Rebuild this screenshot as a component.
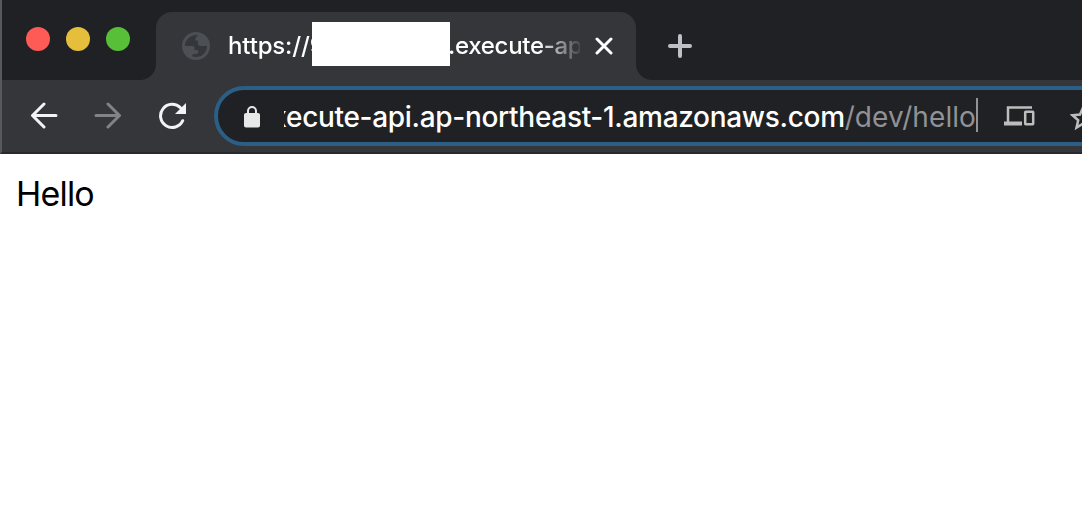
<div class="browser">
  <div class="tabstrip">
    <div class="lights">
      <span class="light red"></span>
      <span class="light yellow"></span>
      <span class="light green"></span>
    </div>
    <div class="tab">
      <svg class="globe" width="28" height="28" viewBox="0 0 28 28">
        <circle cx="14" cy="14" r="14" fill="#4c5054" />
        <path d="M3 14C3.500 11.500 5 9 8 9H13Q13 5.500 16 3.500L14.500 3L13 5.500V8.500H16V11.500Q16 14 18.500 14H25C25 20.500 20 25 14 25Q11.500 25 10.500 24.300V22H13.500Q16.500 22 16.500 19.500Q16.500 18 14.500 18H12.500V15.500Q12.500 14 10.500 14Z" fill="#35363a" />
        <path d="M3 14C3 8 8 3 14.500 3L13 5.500V9Z" fill="#35363a" />
      </svg>
      <div class="title"><span class="scheme">https://9</span><span class="mask"></span><span class="rest">.execute-api</span></div>
      <svg class="close" width="18" height="18" viewBox="0 0 18 18"><path d="M2 2L16 16M16 2L2 16" stroke="#fff" stroke-width="3" stroke-linecap="round" /></svg>
    </div>
    <svg class="plus" width="24" height="24" viewBox="0 0 24 24"><path d="M12 2V22M2 12H22" stroke="#bdc1c5" stroke-width="4" stroke-linecap="round" /></svg>
  </div>
  <div class="toolbar">
    <svg class="nav" width="28" height="28" viewBox="0 0 28 28"><path d="M26 13.500H3M14 2L2.500 13.500L14 25" fill="none" stroke="#f1f3f4" stroke-width="3" stroke-linecap="round" stroke-linejoin="round" /></svg>
    <svg class="nav" width="28" height="28" viewBox="0 0 28 28"><path d="M2 13.500H25M14 2L25.500 13.500L14 25" fill="none" stroke="#828386" stroke-width="3" stroke-linecap="round" stroke-linejoin="round" /></svg>
    <svg class="nav" width="28" height="28" viewBox="0 0 28 28"><path d="M24.700 18.700A11.600 11.600 0 1 1 22.500 5.800" fill="none" stroke="#f1f3f4" stroke-width="3" stroke-linecap="round" /><path d="M28 1V12H17Z" fill="#f1f3f4" /></svg>
    <div class="omnibox">
      <svg class="lock" width="16" height="22" viewBox="0 0 16 22"><path d="M4 8V5A4 4 0 0 1 12 5V8" fill="none" stroke="#e8e8e8" stroke-width="2" /><rect y="7" width="16" height="14.500" rx="2" fill="#e8e8e8" /></svg>
      <div class="url"><div class="line"><span class="host">execute-api.ap-northeast-1.amazonaws.com</span><span class="path">/dev/hello</span></div></div>
      <span class="caret"></span>
      <svg class="devices" width="32" height="22" viewBox="0 0 32 22"><path d="M28 2.500H4V17" fill="none" stroke="#bdbdbd" stroke-width="2.500" /><path d="M0 16.500H18V20.500H0Z" fill="#bdbdbd" /><rect x="21.200" y="6.700" width="8" height="12.600" rx="0.500" fill="none" stroke="#bdbdbd" stroke-width="2.500" /></svg>
      <svg class="star" width="26" height="26" viewBox="0 0 26 26"><path d="M13 2.500L16 9.500L23.500 10.200L17.800 15.200L19.500 22.600L13 18.700L6.500 22.600L8.200 15.200L2.500 10.200L10 9.500Z" fill="none" stroke="#bdbdbd" stroke-width="2.500" /></svg>
    </div>
  </div>
  <main>Hello</main>
</div>

<style>
  :global(body) { margin: 0; background: #fff; }
  .browser { width: 1082px; height: 522px; overflow: hidden; background: #fff; font-family: Inter, sans-serif; }
  svg { display: block; flex: none; }
  .tabstrip { box-sizing: border-box; height: 80px; display: flex; background: #202124; border-left: 2px solid #58595c; }
  .lights { display: flex; gap: 16px; padding: 27px 0 0 24px; width: 130px; }
  .light { width: 24px; height: 24px; border-radius: 50%; }
  .red { background: #ff5b56; }
  .yellow { background: #e5bf3c; }
  .green { background: #58c038; }
  .tab { position: relative; box-sizing: border-box; width: 480px; height: 68px; margin-top: 12px; padding-left: 26px; display: flex; align-items: center; background: #35363a; border-radius: 16px 16px 0 0; }
  .tab::before, .tab::after { content: ""; position: absolute; bottom: 0; width: 16px; height: 16px; }
  .tab::before { left: -16px; background: radial-gradient(circle at 0 0, transparent 15.500px, #35363a 16.500px); }
  .tab::after { right: -16px; background: radial-gradient(circle at 100% 0, transparent 15.500px, #35363a 16.500px); }
  .title { display: flex; align-items: center; width: 352px; height: 48px; margin-left: 18px; overflow: hidden; color: #fff; font-size: 24px; font-weight: 500; line-height: 44px; white-space: nowrap; -webkit-mask-image: linear-gradient(90deg, #000 310px, transparent 356px); mask-image: linear-gradient(90deg, #000 310px, transparent 356px); }
  .scheme { width: 84px; overflow: hidden; flex: none; letter-spacing: -0.15px; }
  .mask { width: 138px; height: 44px; margin-bottom: 4px; background: #fff; flex: none; }
  .rest { margin-left: -2px; letter-spacing: -0.3px; }
  .close { margin-left: 15px; }
  .plus { margin: 34px 0 0 32px; }
  .toolbar { box-sizing: border-box; height: 74px; display: flex; align-items: flex-start; background: #35363a; border-left: 2px solid #58595c; border-bottom: 2px solid #28292c; padding: 6px 0 0 28px; }
  .nav { margin: 16px 36px 0 0; }
  .omnibox { box-sizing: border-box; flex: none; width: 920px; height: 60px; margin-left: -8px; display: flex; align-items: center; border: 4px solid #2b5f85; border-radius: 30px; background: #202124; padding-left: 26px; }
  .lock { margin-top: 2px; }
  .url { width: 692px; margin-left: 24px; overflow: hidden; display: flex; justify-content: flex-end; font-size: 28px; line-height: 40px; padding-top: 1px; }
  .line { white-space: nowrap; flex: none; }
  .host { color: #fff; font-weight: 500; letter-spacing: -0.31px; }
  .path { color: #919295; letter-spacing: 0.08px; }
  .caret { width: 2px; height: 34px; background: #929396; flex: none; margin-top: -2px; }
  .devices { margin-left: 26px; }
  .star { margin: 4px 0 0 34px; }
  main { padding: 20px 16px; font-size: 34px; line-height: 40px; letter-spacing: -0.8px; color: #000; }
</style>
